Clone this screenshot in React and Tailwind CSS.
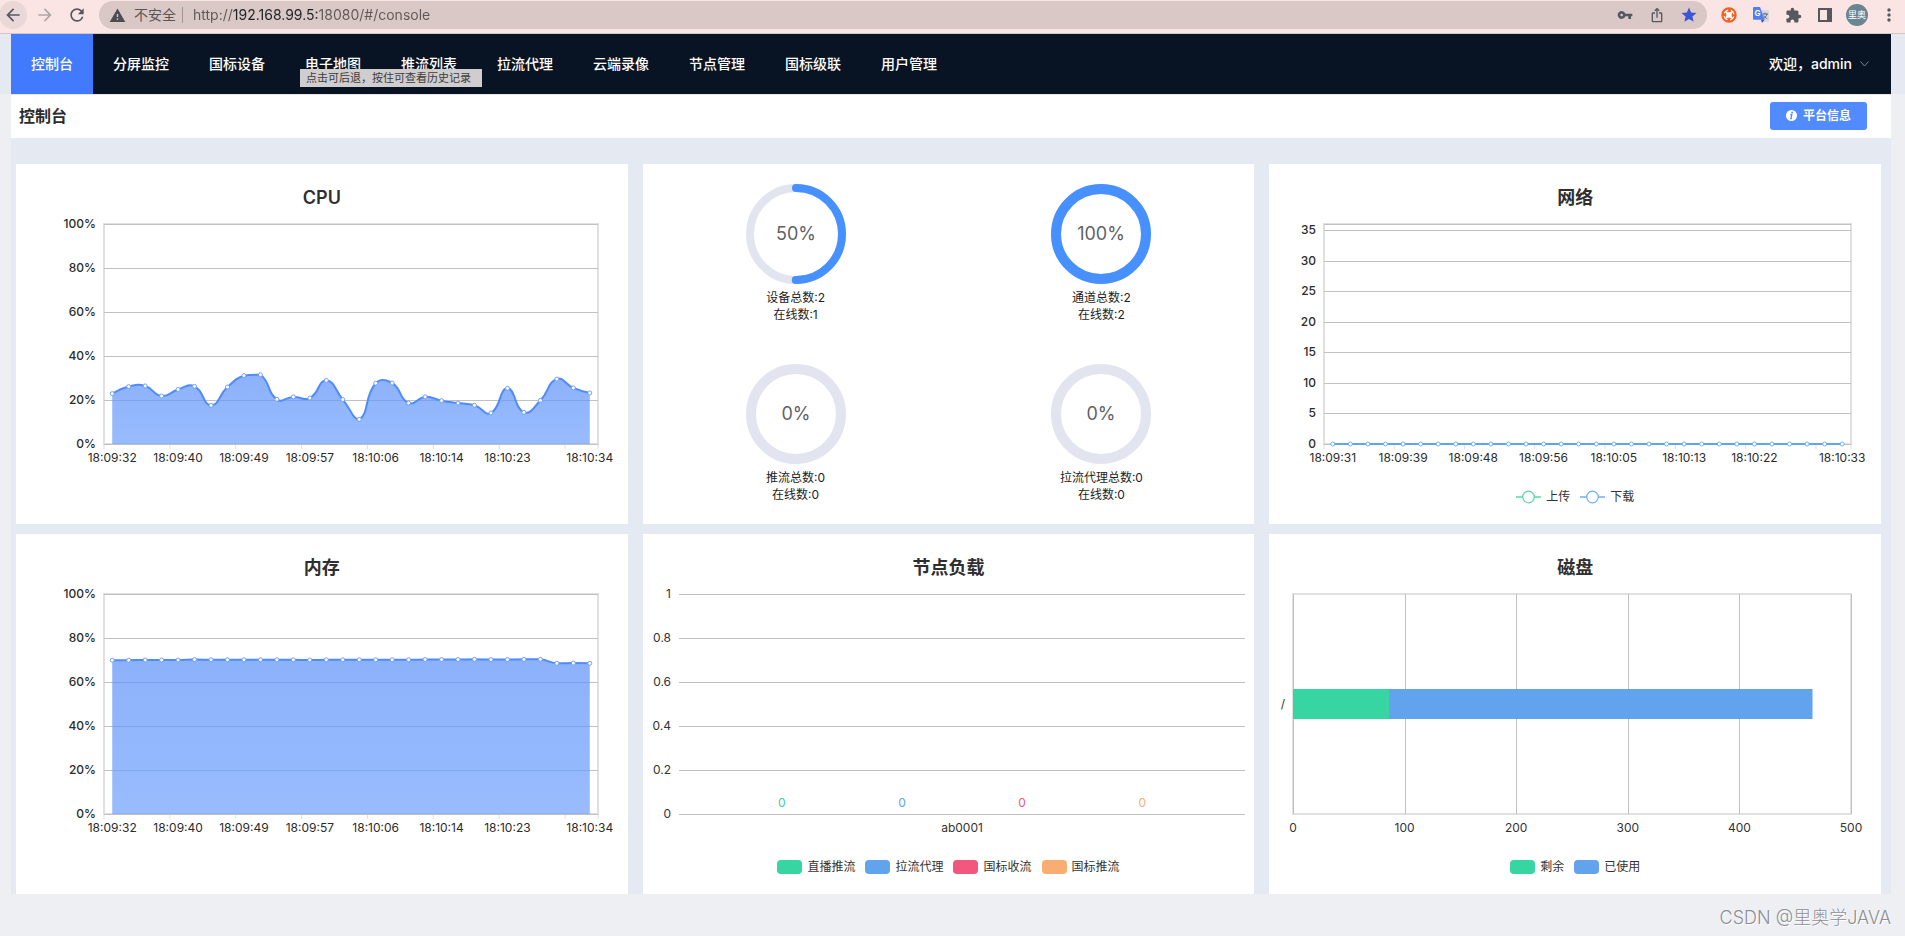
import React, { useState, useRef, useLayoutEffect } from "react";
import {
  MdArrowBack,
  MdArrowForward,
  MdRefresh,
  MdWarning,
  MdVpnKey,
  MdIosShare,
  MdStar,
  MdExtension,
  MdMoreVert,
} from "react-icons/md";

const navItems = [
  "控制台",
  "分屏监控",
  "国标设备",
  "电子地图",
  "推流列表",
  "拉流代理",
  "云端录像",
  "节点管理",
  "国标级联",
  "用户管理",
];

const cpuData = [
  22.9, 26.1, 26.4, 21.8, 24.8, 26.2, 17.6, 25.9, 31.1, 31.5, 20.3, 21.4, 20.9,
  28.9, 20.2, 11.2, 27.6, 27.7, 18.6, 21.4, 19.7, 18.6, 17.6, 14.1, 25.3, 14.4,
  19.8, 29.5, 25.5, 23.2,
];

const memoryData = [
  69.9, 69.9, 70, 70, 70, 70.2, 70.1, 70.1, 70.1, 70.1, 70.1, 70.1, 70, 70.1,
  70.1, 70.1, 70.1, 70.1, 70.1, 70.2, 70.2, 70.2, 70.3, 70.2, 70.2, 70.3, 70.3,
  68.5, 68.6, 68.5,
];

const networkData = Array(30).fill(0);

const percentTicks = [0, 20, 40, 60, 80, 100].map((value) => ({
  value,
  label: `${value}%`,
}));
const networkTicks = [0, 5, 10, 15, 20, 25, 30, 35].map((value) => ({
  value,
  label: `${value}`,
}));

const usageTimes = [
  "18:09:32",
  "18:09:40",
  "18:09:49",
  "18:09:57",
  "18:10:06",
  "18:10:14",
  "18:10:23",
  "18:10:34",
];
const networkTimes = [
  "18:09:31",
  "18:09:39",
  "18:09:48",
  "18:09:56",
  "18:10:05",
  "18:10:13",
  "18:10:22",
  "18:10:33",
];

const counters = [
  { percent: 50, total: "设备总数:2", online: "在线数:1", stroke: 8 },
  { percent: 100, total: "通道总数:2", online: "在线数:2", stroke: 10 },
  { percent: 0, total: "推流总数:0", online: "在线数:0", stroke: 10 },
  { percent: 0, total: "拉流代理总数:0", online: "在线数:0", stroke: 10 },
];

const nodeSeries = [
  { name: "直播推流", value: 0, color: "#37d5a2" },
  { name: "拉流代理", value: 0, color: "#61a3ec" },
  { name: "国标收流", value: 0, color: "#f2577d" },
  { name: "国标推流", value: 0, color: "#f8ae73" },
];

const diskSeries = [
  { name: "剩余", value: 86, color: "#37d5a2" },
  { name: "已使用", value: 379.5, color: "#61a3ec" },
];

const CHART_HEIGHT = 360;
const TOP = 60;
const BOTTOM = 280;

function useWidth() {
  const ref = useRef(null);
  const [width, setWidth] = useState(612);

  useLayoutEffect(() => {
    const update = () => setWidth(Math.round(ref.current.clientWidth));
    update();
    const observer = new ResizeObserver(update);
    observer.observe(ref.current);
    return () => observer.disconnect();
  }, []);

  return [ref, width];
}

// bezier through all points, handles never leave the range of the series
function smoothPath(points) {
  const ys = points.map((p) => p[1]);
  const min = Math.min(...ys);
  const max = Math.max(...ys);
  const handle = (i, dir) => {
    const p = points[i];
    const prev = points[i - 1];
    const next = points[i + 1];
    if (!prev || !next) return p;
    const lenPrev = Math.hypot(p[0] - prev[0], p[1] - prev[1]);
    const lenNext = Math.hypot(next[0] - p[0], next[1] - p[1]);
    const ratio = (dir > 0 ? lenNext : lenPrev) / (lenPrev + lenNext);
    const y = p[1] + dir * (next[1] - prev[1]) * 0.5 * ratio;
    return [
      p[0] + dir * (next[0] - prev[0]) * 0.5 * ratio,
      Math.min(max, Math.max(min, y)),
    ];
  };
  return points
    .map((p, i) =>
      i === 0 ? `M${p}` : `C${handle(i - 1, 1)} ${handle(i, -1)} ${p}`
    )
    .join(" ");
}

function Card({ title, legend, children }) {
  return (
    <section className="relative h-[360px] bg-white">
      {title && (
        <h2 className="absolute inset-x-0 top-5 text-center text-lg font-semibold text-[#2f2f2f]">
          {title}
        </h2>
      )}
      {children}
      {legend && (
        <ul className="absolute inset-x-0 bottom-[17px] flex justify-center gap-2.5 text-xs leading-5 text-[#333]">
          {legend}
        </ul>
      )}
    </section>
  );
}

function Swatches({ series }) {
  return series.map((item) => (
    <li key={item.name} className="flex items-center gap-[5px]">
      <span
        className="h-3.5 w-[25px] rounded"
        style={{ backgroundColor: item.color }}
      ></span>
      {item.name}
    </li>
  ));
}

function LineMark({ name, color }) {
  return (
    <li className="flex items-center gap-[5px]">
      <svg width="25" height="14" viewBox="0 0 25 14">
        <path d="M0 7h25" stroke={color} strokeWidth="1.5" />
        <circle cx="12.5" cy="7" r="5.8" fill="#fff" stroke={color} strokeWidth="1.3" />
      </svg>
      {name}
    </li>
  );
}

function Frame({ left, right }) {
  return (
    <rect
      x={left}
      y={TOP}
      width={right - left}
      height={BOTTOM - TOP}
      fill="none"
      stroke="#e0e0e0"
      strokeWidth="2"
      shapeRendering="crispEdges"
    />
  );
}

function TimeChart({ id, data, left, max, ticks, times, color, area }) {
  const [ref, width] = useWidth();
  const right = width - 30;
  const band = (right - left) / data.length;
  const y = (value) => BOTTOM - (value / max) * (BOTTOM - TOP);
  const x = (index) => left + band * (index + 0.5);
  const points = data.map((value, i) => [x(i), y(value)]);
  const line = smoothPath(points);
  const bounds = [0, 4, 8, 12, 16, 20, 24, 28, 30];

  return (
    <div ref={ref}>
      <svg width={width} height={CHART_HEIGHT} className="block text-xs">
        <defs>
          <linearGradient id={id} x1="0" y1="0" x2="0" y2="1">
            <stop offset="0" stopColor="#5c91fa" />
            <stop offset="1" stopColor="#6c9ffc" />
          </linearGradient>
        </defs>
        <Frame left={left} right={right} />
        {ticks.map((tick) => (
          <g key={tick.value}>
            <path
              d={`M${left} ${Math.round(y(tick.value)) + 0.5}H${right}`}
              stroke="#c1c1c1"
              shapeRendering="crispEdges"
            />
            <text
              x={left - 8}
              y={y(tick.value) + 4}
              textAnchor="end"
              fill="#2b2b2b"
              className="font-medium"
            >
              {tick.label}
            </text>
          </g>
        ))}
        {max % 5 !== 0 && (
          <path
            d={`M${left} ${TOP + 0.5}H${right}`}
            stroke="#c1c1c1"
            shapeRendering="crispEdges"
          />
        )}
        {bounds.map((bound) => (
          <path
            key={bound}
            d={`M${left + band * bound} ${BOTTOM + 1}v4`}
            stroke="#e0e0e0"
          />
        ))}
        {times.map((time, i) => (
          <text
            key={time}
            x={x(i === times.length - 1 ? data.length - 1 : i * 4)}
            y={BOTTOM + 18}
            textAnchor="middle"
            fill="#2b2b2b"
          >
            {time}
          </text>
        ))}
        {area && (
          <path
            d={`${line} V${BOTTOM} H${x(0)} Z`}
            fill={`url(#${id})`}
            fillOpacity="0.7"
          />
        )}
        <path d={line} fill="none" stroke={color} strokeWidth="2" />
        {points.map(([cx, cy], i) => (
          <circle
            key={i}
            cx={cx}
            cy={cy}
            r="2"
            fill="#fff"
            stroke={area ? "#6fa1ff" : "#6db4ea"}
          />
        ))}
      </svg>
    </div>
  );
}

function NodeChart() {
  const [ref, width] = useWidth();
  const left = 36;
  const right = width - 10;
  const center = (left + right) / 2;
  const step = (right - left) * 0.2123;
  const ticks = [0, 0.2, 0.4, 0.6, 0.8, 1];

  return (
    <div ref={ref}>
      <svg width={width} height={CHART_HEIGHT} className="block text-xs">
        {ticks.map((tick) => {
          const y = Math.round(BOTTOM - tick * (BOTTOM - TOP));
          return (
            <g key={tick}>
              <path
                d={`M${left} ${y + 0.5}H${right}`}
                stroke="#c1c1c1"
                shapeRendering="crispEdges"
              />
              <text x={left - 8} y={y + 4} textAnchor="end" fill="#333">
                {tick}
              </text>
            </g>
          );
        })}
        {nodeSeries.map((item, i) => (
          <text
            key={item.name}
            x={center + step * (i - 1.5)}
            y={BOTTOM - 7}
            textAnchor="middle"
            fill={item.color}
          >
            {item.value}
          </text>
        ))}
        <text x={center} y={BOTTOM + 18} textAnchor="middle" fill="#333">
          ab0001
        </text>
      </svg>
    </div>
  );
}

function DiskChart() {
  const [ref, width] = useWidth();
  const left = 24;
  const right = width - 30;
  const x = (value) => left + ((right - left) * value) / 500;
  const [free, used] = diskSeries;

  return (
    <div ref={ref}>
      <svg width={width} height={CHART_HEIGHT} className="block text-xs">
        <Frame left={left} right={right} />
        {[0, 100, 200, 300, 400, 500].map((tick) => (
          <g key={tick}>
            <path
              d={`M${Math.round(x(tick)) + 0.5} ${TOP}V${BOTTOM}`}
              stroke="#c1c1c1"
              shapeRendering="crispEdges"
            />
            <text x={x(tick)} y={BOTTOM + 18} textAnchor="middle" fill="#333">
              {tick}
            </text>
          </g>
        ))}
        <text x={left - 8} y="174" textAnchor="end" fill="#333">
          /
        </text>
        <rect x={x(0)} y="155" width={x(free.value) - x(0)} height="30" fill={free.color} />
        <rect
          x={x(free.value)}
          y="155"
          width={x(free.value + used.value) - x(free.value)}
          height="30"
          fill={used.color}
        />
      </svg>
    </div>
  );
}

function Counter({ percent, total, online, stroke }) {
  const r = 50 - stroke / 2;
  const length = 2 * Math.PI * r;

  return (
    <div className="flex h-[180px] flex-col items-center pt-5 text-xs leading-[17px] text-[#222]">
      <svg width="100" height="100" viewBox="0 0 100 100" className="mb-[5px] text-lg">
        <circle cx="50" cy="50" r={r} fill="none" stroke="#e2e4f0" strokeWidth={stroke} />
        {percent > 0 && (
          <circle
            cx="50"
            cy="50"
            r={r}
            fill="none"
            stroke="#4690ff"
            strokeWidth={stroke}
            strokeLinecap="round"
            strokeDasharray={`${(length * percent) / 100} ${length}`}
            transform="rotate(-90 50 50)"
          />
        )}
        <text x="50" y="56" textAnchor="middle" fill="#606266">
          {percent}%
        </text>
      </svg>
      <p>{total}</p>
      <p>{online}</p>
    </div>
  );
}

function BrowserBar() {
  return (
    <div className="flex h-[34px] items-start border-b border-[#d3c6c7] bg-[#fbe5e4] text-[#55585d]">
      <div className="flex h-[30px] items-center gap-1 pr-2">
        <button
          aria-label="后退"
          className="-ml-px flex h-7 w-7 items-center justify-center rounded-full bg-[#ead8d8]"
        >
          <MdArrowBack size={20} />
        </button>
        <button
          aria-label="前进"
          className="flex h-7 w-7 items-center justify-center text-[#b3a5a6]"
        >
          <MdArrowForward size={20} />
        </button>
        <button aria-label="刷新" className="flex h-7 w-7 items-center justify-center">
          <MdRefresh size={20} />
        </button>
      </div>
      <div className="mt-px flex h-7 flex-1 items-center rounded-full bg-[#d9c8c6] pr-0.5 pl-2.5">
        <MdWarning size={17} className="shrink-0 text-[#4b4d51]" />
        <label htmlFor="address" className="ml-2 shrink-0 text-sm text-[#5b5456]">
          不安全
        </label>
        <span className="ml-1.5 mr-2.5 h-4 w-px bg-[#a39596]"></span>
        <input
          id="address"
          type="text"
          defaultValue="http://192.168.99.5:18080/#/console"
          className="min-w-0 flex-1 bg-[linear-gradient(to_right,#5f5657_40px,#202124_40px,#202124_125px,#5f5657_125px)] bg-clip-text text-sm text-transparent outline-none"
        />
        <span className="flex w-8 justify-center">
          <MdVpnKey size={16} />
        </span>
        <span className="flex w-8 justify-center">
          <MdIosShare size={16} />
        </span>
        <span className="flex w-8 justify-center">
          <MdStar size={18} className="text-[#3a55d6]" />
        </span>
      </div>
      <div className="flex h-[30px] items-center pl-1.5">
        <span className="flex w-8 justify-center">
          <svg width="16" height="16" viewBox="0 0 16 16">
            <circle cx="8" cy="8" r="7.7" fill="#ee6123" />
            <circle
              cx="8"
              cy="8"
              r="5"
              fill="none"
              stroke="#fff"
              strokeWidth="1.2"
              strokeDasharray="5 2.85"
              strokeDashoffset="-1.4"
            />
            <path d="M8 4.600l1.300 1.900 2.100 1.500-2.100 1.500L8 11.400 6.700 9.500 4.600 8l2.100-1.500z" fill="#fff" />
            <path
              d="M5 5l6 6M11 5l-6 6"
              stroke="#fff"
              strokeWidth="1.8"
            />
          </svg>
        </span>
        <span className="flex w-8 justify-center">
          <svg width="16" height="16" viewBox="0 0 16 16">
            <path d="M6 3h9a1 1 0 0 1 1 1v10a1 1 0 0 1-1 1H9z" fill="#d5d8dc" />
            <path
              d="M9.5 7h5.5M12 5.6V7M14 7c-.4 2-2 3.600-3.500 4.400M10.800 8.500c.6 1.400 2 2.600 3.400 3.200"
              fill="none"
              stroke="#5f6b73"
              strokeWidth="1"
            />
            <path d="M8 12.500h3.600L9 16z" fill="#2f49b8" />
            <path d="M1 0h6l4.600 12.800H1a1 1 0 0 1-1-1V1a1 1 0 0 1 1-1z" fill="#4f7df3" />
            <text x="1.500" y="9" fontSize="8" fontWeight="700" fill="#fff">
              G
            </text>
          </svg>
        </span>
        <span className="flex w-8 justify-center">
          <MdExtension size={17} />
        </span>
        <span className="flex w-8 justify-center">
          <svg width="14" height="14" viewBox="0 0 14 14">
            <path d="M0 0h14v14H0zM2 2v10h7V2z" fill="currentColor" fillRule="evenodd" />
          </svg>
        </span>
        <span className="flex w-8 justify-center">
          <span className="flex h-[22px] w-[22px] items-center justify-center rounded-full bg-[#6c8592] text-[9px] text-white">
            里奥
          </span>
        </span>
        <button aria-label="更多" className="flex w-8 justify-center">
          <MdMoreVert size={20} />
        </button>
      </div>
    </div>
  );
}

export default function App() {
  const [active, setActive] = useState("控制台");

  return (
    <div className="relative min-h-screen bg-[#eeeff3] font-['Inter','Noto_Sans_CJK_SC',sans-serif]">
      <BrowserBar />

      <header className="bg-[#e5e9f2] pr-3.5 pl-[11px]">
        <div className="flex h-[60px] items-center justify-between bg-[#081423] text-sm font-medium text-white">
          <nav className="flex">
            {navItems.map((item) => (
              <a
                key={item}
                href="#/console"
                onClick={() => setActive(item)}
                className={`px-5 leading-[60px] whitespace-nowrap ${
                  active === item ? "bg-[#417aff]" : ""
                }`}
              >
                {item}
              </a>
            ))}
          </nav>
          <button className="flex items-center gap-2 pr-[22px] font-medium">
            欢迎，admin
            <svg width="9" height="6" viewBox="0 0 9 6">
              <path d="M.5.5l4 4.500 4-4.500" fill="none" stroke="#7b828c" strokeWidth="1" />
            </svg>
          </button>
        </div>
      </header>

      {/* native tooltip of the back button */}
      <div
        role="tooltip"
        className="absolute top-[69px] left-[300px] h-[18px] w-[182px] bg-[#cfcdce] pl-1.5 text-[11px] leading-[18px] whitespace-nowrap text-[#3c3c3c]"
      >
        点击可后退，按住可查看历史记录
      </div>

      <main className="mr-3.5 ml-[11px] bg-[#e5eaf2]">
        <div className="flex h-11 items-center justify-between border-t border-[#e8e8ea] bg-white pr-6 pb-0.5 pl-2">
          <h1 className="text-base font-semibold text-[#2c2c2c]">控制台</h1>
          <button className="flex h-7 items-center gap-1.5 rounded-[3px] bg-[#518bff] px-4 text-xs font-bold text-white">
            <svg width="11" height="11" viewBox="0 0 11 11">
              <circle cx="5.500" cy="5.500" r="5.500" fill="#fff" />
              <path
                d="M4.400 4.500h1.400l-.9 4h1"
                fill="none"
                stroke="#518bff"
                strokeWidth="1.300"
              />
              <circle cx="6.100" cy="2.500" r=".9" fill="#518bff" />
            </svg>
            平台信息
          </button>
        </div>

        <div className="grid grid-cols-3 gap-x-[15px] gap-y-2.5 pt-[26px] pr-2.5 pl-[5px]">
          <Card title="CPU">
            <TimeChart
              id="cpu"
              data={cpuData}
              left={88}
              max={100}
              ticks={percentTicks}
              times={usageTimes}
              color="#4f8bff"
              area
            />
          </Card>
          <Card>
            <div className="grid grid-cols-2">
              {counters.map((item) => (
                <Counter key={item.total} {...item} />
              ))}
            </div>
          </Card>
          <Card
            title="网络"
            legend={
              <>
                <LineMark name="上传" color="#5ad8a6" />
                <LineMark name="下载" color="#71affb" />
              </>
            }
          >
            <TimeChart
              id="network"
              data={networkData}
              left={55}
              max={36}
              ticks={networkTicks}
              times={networkTimes}
              color="#61a3ec"
            />
          </Card>
          <Card title="内存">
            <TimeChart
              id="memory"
              data={memoryData}
              left={88}
              max={100}
              ticks={percentTicks}
              times={usageTimes}
              color="#4f8bff"
              area
            />
          </Card>
          <Card title="节点负载" legend={<Swatches series={nodeSeries} />}>
            <NodeChart />
          </Card>
          <Card title="磁盘" legend={<Swatches series={diskSeries} />}>
            <DiskChart />
          </Card>
        </div>
      </main>

      <footer className="flex h-[42px] items-center justify-end pt-1.5 pr-3.5 text-lg font-light text-[#8d8f94] [text-shadow:1px_1px_0_#fff]">
        CSDN @里奥学JAVA
      </footer>
    </div>
  );
}
